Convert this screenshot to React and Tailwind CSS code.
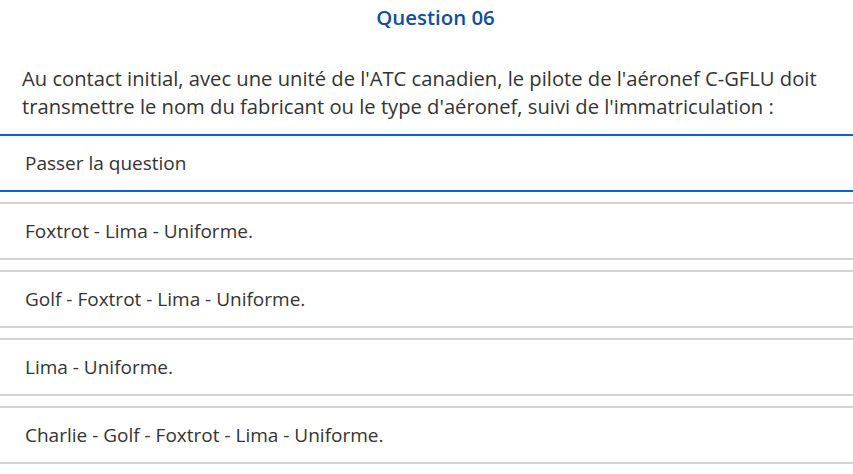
export default function App() {
  const options = [
    "Foxtrot - Lima - Uniforme.",
    "Golf - Foxtrot - Lima - Uniforme.",
    "Lima - Uniforme.",
    "Charlie - Golf - Foxtrot - Lima - Uniforme.",
  ];

  return (
    <div className="w-[853px] h-[474px] overflow-hidden bg-white text-[#333333] font-['Open_Sans',sans-serif]">
      <h2 className="pt-[4px] pl-[18px] h-[64px] text-center text-[20.4px] leading-[26px] font-semibold text-[#0b4fa3]">
        Question 06
      </h2>
      <p className="pl-[22px] pr-[8px] pb-[14px] text-[20.2px] leading-[28px]">
        Au contact initial, avec une unité de l'ATC canadien, le pilote de l'aéronef C-GFLU doit
        transmettre le nom du fabricant ou le type d'aéronef, suivi de l'immatriculation :
      </p>
      <div className="h-[58px] flex items-center px-[25px] border-y-2 border-[#0a62d8] text-[19px]">
        Passer la question
      </div>
      {options.map((opt) => (
        <div
          key={opt}
          className="mt-[10px] h-[58px] flex items-center px-[25px] border-y-2 border-[#d3d3d3] text-[19px]"
        >
          {opt}
        </div>
      ))}
    </div>
  );
}
